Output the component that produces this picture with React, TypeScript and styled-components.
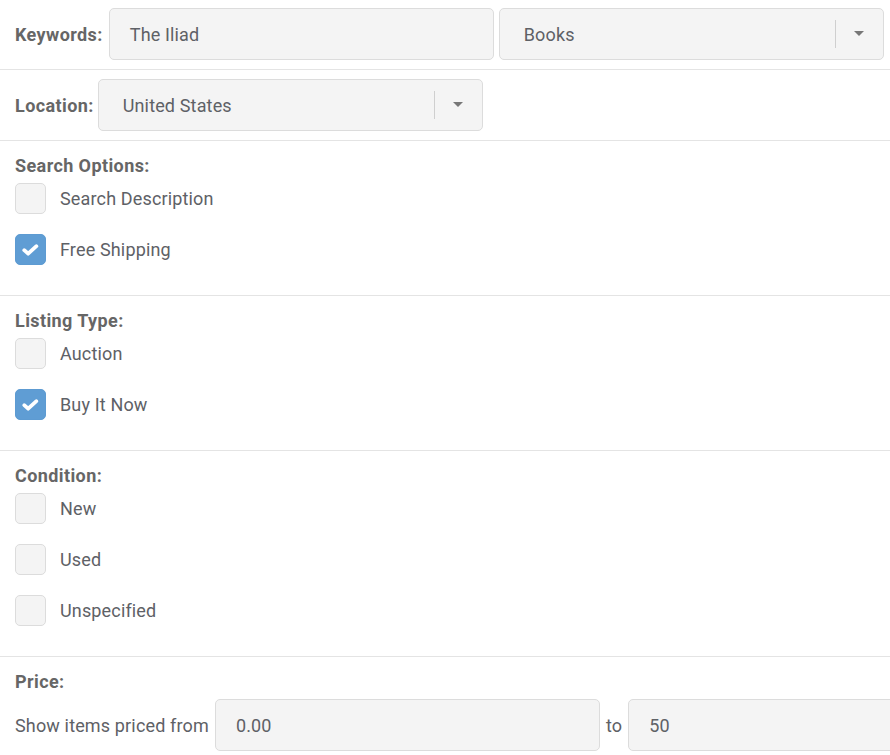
import React from "react";
import styled, { createGlobalStyle } from "styled-components";

const Global = createGlobalStyle`
  html, body { margin: 0; padding: 0; background: #fff; overflow: hidden; }
  body { font-family: Roboto, "Liberation Sans", sans-serif; color: #5e6166; }
  * { box-sizing: border-box; }
`;

const Form = styled.div`
  width: 890px;
  display: flex;
  flex-direction: column;
`;

const Row = styled.div<{ $top: number; $gap: number }>`
  display: flex;
  align-items: center;
  gap: ${(p) => p.$gap}px;
  padding: ${(p) => p.$top}px 0 9px 15px;
  border-bottom: 1px solid #e4e4e4;
  white-space: nowrap;
`;

const FieldLabel = styled.span`
  font-size: 18px;
  font-weight: 700;
  letter-spacing: 0.4px;
  color: #666;
  margin-right: 1px;
`;

const TextInput = styled.div`
  width: 385px;
  height: 52px;
  flex: none;
  display: flex;
  align-items: center;
  padding: 0 20px;
  background: #f4f4f4;
  border: 1px solid #dcdcdc;
  border-radius: 5px;
  font-size: 18px;
  letter-spacing: 0.15px;
  color: #5e6166;
`;

const SelectBox = styled(TextInput)`
  padding: 0 0 0 24px;
`;

const SelectValue = styled.span`
  flex: 1;
`;

const SelectDivider = styled.span`
  width: 1px;
  height: 28px;
  background: #cfcfcf;
`;

const CaretWrap = styled.span`
  width: 47px;
  display: flex;
  justify-content: center;
  align-items: center;
  padding-bottom: 2px;
`;

const Section = styled.div`
  padding: 13px 15px 30px;
  border-bottom: 1px solid #e4e4e4;
  display: flex;
  flex-direction: column;
`;

const SectionTitle = styled.div`
  font-size: 18px;
  line-height: 24px;
  font-weight: 700;
  letter-spacing: 0.4px;
  color: #666;
  margin-bottom: 5px;
`;

const Options = styled.div`
  display: flex;
  flex-direction: column;
  gap: 20px;
`;

const Option = styled.label`
  display: flex;
  align-items: center;
  gap: 14px;
  font-size: 18px;
  letter-spacing: 0.15px;
  color: #5e6166;
`;

const Box = styled.span<{ $checked?: boolean }>`
  width: 31px;
  height: 31px;
  flex: none;
  border-radius: 5px;
  border: 1px solid ${(p) => (p.$checked ? "#5d9bd2" : "#dcdcdc")};
  background: ${(p) => (p.$checked ? "#5f9dd4" : "#f4f4f4")};
  display: flex;
  align-items: center;
  justify-content: center;
`;

const PriceSection = styled.div`
  padding: 13px 0 0 15px;
  display: flex;
  flex-direction: column;
`;

const PriceRow = styled.div`
  display: flex;
  align-items: center;
  gap: 6px;
  white-space: nowrap;
  font-size: 18px;
  letter-spacing: 0.15px;
  color: #5e6166;
`;

const Caret = () => (
  <svg width="10" height="5" viewBox="0 0 10 5">
    <path d="M0 0 H10 L5 5 Z" fill="#777" />
  </svg>
);

const Check = () => (
  <svg width="31" height="31" viewBox="0 0 31 31">
    <polyline
      points="8.8,16.2 13,20 21.8,12"
      fill="none"
      stroke="#fff"
      strokeWidth="4"
      strokeLinecap="round"
      strokeLinejoin="round"
    />
  </svg>
);

const Select = ({ value }: { value: string }) => (
  <SelectBox>
    <SelectValue>{value}</SelectValue>
    <SelectDivider />
    <CaretWrap>
      <Caret />
    </CaretWrap>
  </SelectBox>
);

type Opt = { label: string; checked?: boolean };

const CheckGroup = ({ title, options }: { title: string; options: Opt[] }) => (
  <Section>
    <SectionTitle>{title}</SectionTitle>
    <Options>
      {options.map((o) => (
        <Option key={o.label}>
          <Box $checked={o.checked}>{o.checked && <Check />}</Box>
          {o.label}
        </Option>
      ))}
    </Options>
  </Section>
);

export default function App() {
  return (
    <Form>
      <Global />
      <Row $top={8} $gap={5}>
        <FieldLabel>Keywords:</FieldLabel>
        <TextInput>The Iliad</TextInput>
        <Select value="Books" />
      </Row>
      <Row $top={9} $gap={3}>
        <FieldLabel>Location:</FieldLabel>
        <Select value="United States" />
      </Row>
      <CheckGroup
        title="Search Options:"
        options={[{ label: "Search Description" }, { label: "Free Shipping", checked: true }]}
      />
      <CheckGroup
        title="Listing Type:"
        options={[{ label: "Auction" }, { label: "Buy It Now", checked: true }]}
      />
      <CheckGroup
        title="Condition:"
        options={[{ label: "New" }, { label: "Used" }, { label: "Unspecified" }]}
      />
      <PriceSection>
        <SectionTitle>Price:</SectionTitle>
        <PriceRow>
          Show items priced from
          <TextInput>0.00</TextInput>
          to
          <TextInput>50</TextInput>
        </PriceRow>
      </PriceSection>
    </Form>
  );
}
